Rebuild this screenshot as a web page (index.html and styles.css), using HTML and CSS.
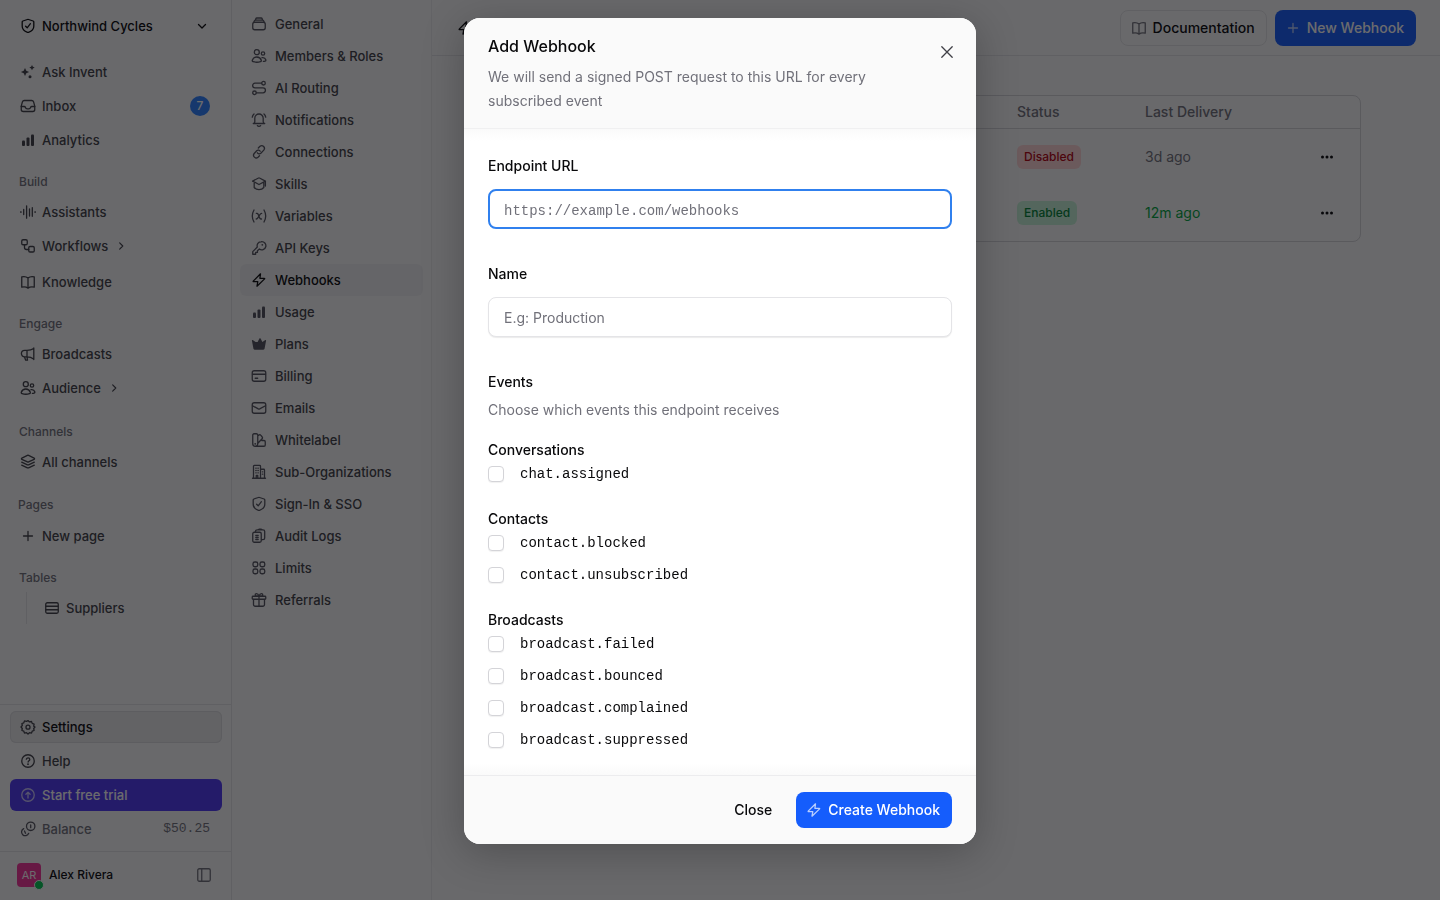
FILE: index.html
```html
<!DOCTYPE html>
<html lang="en">
<head>
<meta charset="UTF-8">
<meta name="viewport" content="width=device-width, initial-scale=1">
<title>Webhooks</title>
<link rel="stylesheet" href="styles.css">
</head>
<body>

<!-- icon sprite -->
<svg class="sprite" aria-hidden="true">
  <symbol id="shield" viewBox="0 0 18 18"><path d="M8.4 2.5 3.9 4a1 1 0 0 0-.7 1v4.2c0 3 2.6 5.1 5.3 6.1.3.1.7.1 1 0 2.7-1 5.300-3.1 5.300-6.1V5a1 1 0 0 0-.7-1L9.600 2.5a2 2 0 0 0-1.2 0z"/><path d="m6.600 9.200 1.600 1.600 3.200-4.1"/></symbol>
  <symbol id="chevron-down" viewBox="0 0 18 18"><path d="m5.500 7.500 3.500 3.500 3.500-3.500"/></symbol>
  <symbol id="chevron-right" viewBox="0 0 18 18"><path d="m7.500 5.500 3.500 3.500-3.500 3.500"/></symbol>
  <symbol id="sparkles" viewBox="0 0 18 18"><g class="fill"><path d="m6 4.900 1.300 2.800 2.800 1.300-2.800 1.300L6 13.100l-1.300-2.800L1.900 9l2.800-1.300z"/><path d="m13 1.900.9 1.800 1.800.9-1.800.9-.9 1.800-.9-1.800-1.800-.9 1.800-.9z"/><circle cx="11" cy="13.800" r="1.500"/></g></symbol>
  <symbol id="inbox" viewBox="0 0 18 18"><path d="M2.250 9.500h3c.6 0 1 .4 1.200.9.200.9.900 1.400 1.800 1.400h1.500c.9 0 1.600-.5 1.800-1.400.2-.5.6-.9 1.200-.9h3"/><path d="M5.300 3.500h7.400a2 2 0 0 1 1.900 1.400l1.150 4.300v3.300a2 2 0 0 1-2 2H4.250a2 2 0 0 1-2-2V9.200L3.400 4.900a2 2 0 0 1 1.900-1.400z"/></symbol>
  <symbol id="bars" viewBox="0 0 18 18"><g class="fill"><rect x="3" y="9.500" width="3" height="5.500" rx="1"/><rect x="7.500" y="6.500" width="3" height="8.500" rx="1"/><rect x="12" y="3.500" width="3" height="11.500" rx="1"/></g></symbol>
  <symbol id="wave" viewBox="0 0 18 18"><path d="M1.900 8.600v.8M4.700 6.500v5M7.600 2.800v12.400M10.500 6v7M13.300 4.700v8.600M16.100 8.600v.8"/></symbol>
  <symbol id="flow" viewBox="0 0 18 18"><rect x="2.750" y="2.750" width="5.500" height="5" rx="1.300"/><rect x="9.750" y="9.500" width="5.500" height="5.500" rx="1.300"/><path d="M5.500 7.750V10.500a2 2 0 0 0 2 2h2.250"/></symbol>
  <symbol id="book" viewBox="0 0 18 18"><path d="M9 5c-1.500-1.300-4-1.700-6.250-1.200v10.400C5 13.700 7.500 14 9 15.200c1.500-1.200 4-1.500 6.250-1V3.800C13 3.300 10.500 3.700 9 5zM9 5v10"/></symbol>
  <symbol id="megaphone" viewBox="0 0 18 18"><path d="M14.800 3v11.500M14.600 3.400C12.500 5 10.300 5.300 8 5.300H5.700a3.200 3.200 0 0 0 0 6.600H8c2.300 0 4.500.5 6.600 2.200M8 5.300v6.600M5.500 12l1.200 3.200h1.800L8 12"/></symbol>
  <symbol id="users" viewBox="0 0 18 18"><circle cx="6.800" cy="5.200" r="2.500"/><circle cx="13" cy="6.500" r="1.700"/><path d="M2.300 13.200C3 11.200 4.800 10 6.800 10s3.800 1.200 4.500 3.200c.2.700-.1 1.300-.8 1.500-2.400.7-5 .7-7.400 0-.7-.2-1-.8-.8-1.500zM12 10.700c1.900-.3 3.300.6 3.800 2 .2.600-.1 1.200-.7 1.400-.6.200-1.100.3-1.700.3"/></symbol>
  <symbol id="layers" viewBox="0 0 18 18"><path d="M8.400 2.400 2.900 5.100c-.6.300-.6 1 0 1.300l5.500 2.500c.4.200.8.200 1.200 0l5.500-2.500c.6-.3.6-1 0-1.300L9.600 2.400a1.400 1.400 0 0 0-1.200 0z"/><path d="m2.700 9.200 5.700 2.600c.4.200.8.200 1.200 0l5.700-2.600M2.700 12.200l5.700 2.600c.4.200.8.200 1.200 0l5.700-2.600"/></symbol>
  <symbol id="plus" viewBox="0 0 18 18"><path d="M9 4.500v9M4.500 9h9"/></symbol>
  <symbol id="rows" viewBox="0 0 18 18"><rect x="2.750" y="3.750" width="12.500" height="10.500" rx="1.500"/><path d="M3 7.250h12M3 10.750h12"/></symbol>
  <symbol id="gear" viewBox="0 0 18 18"><path d="m9 2.600 1.500 1.300 2-.4.700 1.900 1.900.7-.4 2L16 9l-1.300 1.500.4 2-1.900.7-.7 1.900-2-.4L9 16l-1.500-1.300-2 .4-.7-1.900-1.900-.7.4-2L2 9l1.300-1.500-.4-2 1.900-.7.7-1.900 2 .4z"/><circle cx="9" cy="9.200" r="2"/></symbol>
  <symbol id="help" viewBox="0 0 18 18"><circle cx="9" cy="9" r="6.250"/><path d="M7.300 7.200c.3-1 1-1.400 1.800-1.400 1 0 1.700.7 1.700 1.600 0 1.300-1.700 1.400-1.700 2.700"/><circle class="fill" cx="9" cy="12.200" r=".9"/></symbol>
  <symbol id="up" viewBox="0 0 18 18"><circle cx="9" cy="9" r="6.250"/><path d="M9 12V6.200M6.900 8.200 9 6.100l2.100 2.100"/></symbol>
  <symbol id="coins" viewBox="0 0 18 18"><circle cx="11.700" cy="6.300" r="4.200"/><path d="M4.700 8.600a3.700 3.700 0 1 0 5 4.700M11.700 4.900v2.800M5.500 11l1 2.200"/></symbol>
  <symbol id="panel" viewBox="0 0 18 18"><rect x="2.750" y="2.750" width="12.500" height="12.500" rx="1.500"/><path d="M6.750 3v12"/></symbol>
  <symbol id="stack" viewBox="0 0 18 18"><rect x="2.750" y="7.250" width="12.500" height="7.500" rx="2"/><path d="M3.800 7.300l.5-1.300a1.300 1.300 0 0 1 1.200-.8h7a1.300 1.300 0 0 1 1.200.8l.5 1.300M5.500 5l.3-1.200a1.200 1.200 0 0 1 1.200-.8h4a1.200 1.200 0 0 1 1.200.8l.3 1.200"/></symbol>
  <symbol id="route" viewBox="0 0 18 18"><circle cx="13.500" cy="4.200" r="1.800"/><circle cx="4.500" cy="13.800" r="1.800"/><path d="M11.700 4.200H5a2.300 2.300 0 0 0 0 4.700h8a2.400 2.400 0 0 1 0 4.900H6.300"/></symbol>
  <symbol id="bell" viewBox="0 0 18 18"><path d="M13.200 7.200c0-2.400-1.900-4.200-4.200-4.200S4.800 4.800 4.800 7.200v3.600c0 .9-.6 1.700-1.500 1.700h11.400c-.9 0-1.500-.8-1.500-1.700zM7.400 14.600c.7 1 2.500 1 3.200 0M2.300 6.200c.2-1.400.7-2.400 1.700-3.200M15.700 6.200c-.2-1.400-.7-2.400-1.700-3.200"/></symbol>
  <symbol id="link" viewBox="0 0 18 18"><path d="M7.300 9.700a2.300 2.300 0 0 0 3.500.6l3-3.200a2.700 2.700 0 0 0-3.800-3.800L8.300 5"/><path d="M10.200 8.300a2.300 2.300 0 0 0-3.500-.6l-2.500 2.800a2.700 2.700 0 0 0 3.800 3.800l1.500-1.500"/></symbol>
  <symbol id="skills" viewBox="0 0 18 18"><path d="M8.500 3 2.600 6.100 8.500 9.300c.3.200.7.200 1 0l5.900-3.200L9.500 3a1 1 0 0 0-1 0zM4.200 8v4.500c1 1.300 2.900 2.200 4.800 2.200s3.800-.9 4.800-2.200V8M15.400 6.300V11"/></symbol>
  <symbol id="vars" viewBox="0 0 18 18"><path d="M4 3c-2 3.500-2 8.500 0 12M14 3c2 3.500 2 8.500 0 12M6.300 6.300h.6c.7 0 1 .4 1.200.9l1.600 3.900c.2.500.6.900 1.200.9h.6M11.700 6.300c-1 0-1.500.8-2 1.600l-1.500 2.500c-.5.800-1 1.600-2 1.600"/></symbol>
  <symbol id="key" viewBox="0 0 18 18"><path d="M11.200 2.750a4.050 4.050 0 0 0-3.900 5.300L2.750 12.600v2.650h2.900v-1.800h1.800v-1.800l1.900-1.700a4.050 4.050 0 1 0 1.850-7.200z"/><circle class="fill" cx="12.300" cy="5.800" r=".9"/></symbol>
  <symbol id="bolt" viewBox="0 0 18 18"><path d="M10.500 2.800 3.200 10.100c-.2.200 0 .6.300.6h4.300l-.8 4.500 7.600-7.300c.2-.2.100-.6-.3-.6H9.900z"/></symbol>
  <symbol id="crown" viewBox="0 0 18 18"><path class="fill" d="M2.700 5c-.5-.3-1 .1-.8.600l1.500 8c.1.700.6 1.100 1.200 1.100h8.800c.6 0 1.100-.4 1.200-1.100l1.500-8c.2-.5-.3-.9-.8-.6l-2.900 1.900-1.700-3.200c-.3-.5-1.100-.5-1.400 0L7.600 6.900 5.600 6.900z"/></symbol>
  <symbol id="card" viewBox="0 0 18 18"><rect x="2.250" y="3.750" width="13.500" height="10.500" rx="2"/><path d="M2.500 7.250h13M5.200 11.250h2.500"/></symbol>
  <symbol id="mail" viewBox="0 0 18 18"><rect x="2.250" y="3.750" width="13.500" height="10.500" rx="2"/><path d="m2.500 6.800 5.800 3.100c.5.200.9.200 1.400 0l5.800-3.100"/></symbol>
  <symbol id="swatch" viewBox="0 0 18 18"><path d="M4 2.750h2.500a1.250 1.250 0 0 1 1.250 1.250v8.800a2.500 2.500 0 0 1-5 0V4A1.250 1.250 0 0 1 4 2.750zM7.800 5l1.100-.9a1.200 1.200 0 0 1 1.800.1l1.500 1.800a1.200 1.200 0 0 1-.1 1.700L7.600 12.500M11.800 9.500h2.200a1.250 1.250 0 0 1 1.250 1.250V14A1.250 1.250 0 0 1 14 15.250H5.200"/><circle class="fill" cx="5.200" cy="12.800" r=".9"/></symbol>
  <symbol id="building" viewBox="0 0 18 18"><path d="M2.500 15.250h13M3.500 15V3.250a.8.800 0 0 1 .8-.8h5.400a.8.800 0 0 1 .8.8V15M10.500 6.250h3.200a.8.800 0 0 1 .8.800V15M6.250 15v-2.500h1.500V15M5.800 5.200h.4M7.900 5.200h.4M5.800 7.500h.4M7.900 7.500h.4M5.800 9.800h.4M7.900 9.800h.4M12.400 8.800h.3M12.400 11.200h.3"/></symbol>
  <symbol id="logs" viewBox="0 0 18 18"><rect x="2.750" y="5.250" width="8.500" height="10" rx="1.500"/><path d="M5.500 5V4.500a1.700 1.700 0 0 1 1.700-1.700h5.800a1.700 1.700 0 0 1 1.700 1.700v6.500a1.700 1.700 0 0 1-1.700 1.700h-1.500M8 2.800l1-.6h2.300l1 .6M5.800 8.500h2.400M5.800 10.500h2.400M5.800 12.500h2.400"/></symbol>
  <symbol id="limits" viewBox="0 0 18 18"><rect x="3" y="3" width="4.750" height="4.750" rx="1.800"/><rect x="10" y="3" width="4.750" height="4.750" rx="1.800"/><rect x="3" y="10" width="4.750" height="4.750" rx="1.800"/><rect x="10" y="10" width="4.750" height="4.750" rx="1.800"/></symbol>
  <symbol id="gift" viewBox="0 0 18 18"><rect x="2.250" y="5.250" width="13.500" height="3" rx=".8"/><path d="M3.500 8.500v5a1.750 1.750 0 0 0 1.750 1.750h7.500a1.750 1.750 0 0 0 1.750-1.750v-5M9 5.250v10M9 5.200C8.500 3.500 7.600 2.600 6.500 2.600a1.300 1.300 0 0 0 0 2.600zM9 5.200c.5-1.700 1.400-2.600 2.500-2.600a1.300 1.300 0 0 1 0 2.600z"/></symbol>
  <symbol id="dots" viewBox="0 0 18 18"><g class="fill"><circle cx="4.500" cy="9" r="1.500"/><circle cx="9" cy="9" r="1.500"/><circle cx="13.500" cy="9" r="1.500"/></g></symbol>
  <symbol id="close" viewBox="0 0 18 18"><path d="m3.800 3.800 10.400 10.400M14.200 3.800 3.800 14.200"/></symbol>
</svg>

<div class="app">
  <aside class="sidebar">
    <button class="workspace" type="button">
      <svg class="icon"><use href="#shield"/></svg>
      <span>Northwind Cycles</span>
      <svg class="icon push"><use href="#chevron-down"/></svg>
    </button>

    <nav class="menu">
      <a class="item" href="#"><svg class="icon"><use href="#sparkles"/></svg>Ask Invent</a>
      <a class="item" href="#"><svg class="icon"><use href="#inbox"/></svg>Inbox<span class="count">7</span></a>
      <a class="item" href="#"><svg class="icon"><use href="#bars"/></svg>Analytics</a>

      <div class="section">Build</div>
      <a class="item" href="#"><svg class="icon"><use href="#wave"/></svg>Assistants</a>
      <a class="item has-sub" href="#"><svg class="icon"><use href="#flow"/></svg>Workflows<svg class="icon sub"><use href="#chevron-right"/></svg></a>
      <a class="item" href="#"><svg class="icon"><use href="#book"/></svg>Knowledge</a>

      <div class="section">Engage</div>
      <a class="item" href="#"><svg class="icon"><use href="#megaphone"/></svg>Broadcasts</a>
      <a class="item has-sub" href="#"><svg class="icon"><use href="#users"/></svg>Audience<svg class="icon sub"><use href="#chevron-right"/></svg></a>

      <div class="section">Channels</div>
      <a class="item" href="#"><svg class="icon"><use href="#layers"/></svg>All channels</a>

      <div class="section section-tall">Pages</div>
      <a class="item" href="#"><svg class="icon"><use href="#plus"/></svg>New page</a>

      <div class="section">Tables</div>
      <div class="tree">
        <a class="item" href="#"><svg class="icon"><use href="#rows"/></svg>Suppliers</a>
      </div>
    </nav>

    <div class="bottom">
      <a class="item selected" href="#"><svg class="icon"><use href="#gear"/></svg>Settings</a>
      <a class="item" href="#"><svg class="icon"><use href="#help"/></svg>Help</a>
      <a class="item trial" href="#"><svg class="icon"><use href="#up"/></svg>Start free trial</a>
      <a class="item balance" href="#"><svg class="icon"><use href="#coins"/></svg>Balance<span class="amount">$50.25</span></a>
    </div>

    <div class="account">
      <div class="avatar">AR<span class="online"></span></div>
      <span>Alex Rivera</span>
      <button class="panel-toggle" type="button" aria-label="Toggle sidebar"><svg class="icon"><use href="#panel"/></svg></button>
    </div>
  </aside>

  <nav class="settings">
    <a class="item" href="#"><svg class="icon"><use href="#stack"/></svg>General</a>
    <a class="item" href="#"><svg class="icon"><use href="#users"/></svg>Members &amp; Roles</a>
    <a class="item" href="#"><svg class="icon"><use href="#route"/></svg>AI Routing</a>
    <a class="item" href="#"><svg class="icon"><use href="#bell"/></svg>Notifications</a>
    <a class="item" href="#"><svg class="icon"><use href="#link"/></svg>Connections</a>
    <a class="item" href="#"><svg class="icon"><use href="#skills"/></svg>Skills</a>
    <a class="item" href="#"><svg class="icon"><use href="#vars"/></svg>Variables</a>
    <a class="item" href="#"><svg class="icon"><use href="#key"/></svg>API Keys</a>
    <a class="item active" href="#"><svg class="icon"><use href="#bolt"/></svg>Webhooks</a>
    <a class="item" href="#"><svg class="icon"><use href="#bars"/></svg>Usage</a>
    <a class="item" href="#"><svg class="icon"><use href="#crown"/></svg>Plans</a>
    <a class="item" href="#"><svg class="icon"><use href="#card"/></svg>Billing</a>
    <a class="item" href="#"><svg class="icon"><use href="#mail"/></svg>Emails</a>
    <a class="item" href="#"><svg class="icon"><use href="#swatch"/></svg>Whitelabel</a>
    <a class="item" href="#"><svg class="icon"><use href="#building"/></svg>Sub-Organizations</a>
    <a class="item" href="#"><svg class="icon"><use href="#shield"/></svg>Sign-In &amp; SSO</a>
    <a class="item" href="#"><svg class="icon"><use href="#logs"/></svg>Audit Logs</a>
    <a class="item" href="#"><svg class="icon"><use href="#limits"/></svg>Limits</a>
    <a class="item" href="#"><svg class="icon"><use href="#gift"/></svg>Referrals</a>
  </nav>

  <main class="main">
    <header class="topbar">
      <svg class="icon"><use href="#bolt"/></svg>
      <div class="actions">
        <button class="btn btn-outline" type="button"><svg class="icon"><use href="#book"/></svg>Documentation</button>
        <button class="btn btn-primary" type="button"><svg class="icon"><use href="#plus"/></svg>New Webhook</button>
      </div>
    </header>

    <div class="content">
      <div class="table-card">
        <table>
          <thead>
            <tr><td></td><th class="col-status">Status</th><th class="col-delivery">Last Delivery</th><td class="col-more"></td></tr>
          </thead>
          <tbody>
            <tr>
              <td></td>
              <td><span class="badge badge-red">Disabled</span></td>
              <td class="muted">3d ago</td>
              <td><button class="more" type="button" aria-label="More"><svg class="icon"><use href="#dots"/></svg></button></td>
            </tr>
            <tr>
              <td></td>
              <td><span class="badge badge-green">Enabled</span></td>
              <td class="recent">12m ago</td>
              <td><button class="more" type="button" aria-label="More"><svg class="icon"><use href="#dots"/></svg></button></td>
            </tr>
          </tbody>
        </table>
      </div>
    </div>
  </main>
</div>

<div class="overlay">
  <form class="modal" role="dialog" aria-labelledby="modal-title">
    <div class="modal-header">
      <div>
        <h2 id="modal-title">Add Webhook</h2>
        <p>We will send a signed POST request to this URL for every subscribed event</p>
      </div>
      <button class="modal-x" type="button" aria-label="Close dialog"><svg class="icon"><use href="#close"/></svg></button>
    </div>

    <div class="modal-body">
      <div class="field">
        <label for="url">Endpoint URL</label>
        <input class="input input-focus" id="url" type="text" placeholder="https://example.com/webhooks">
      </div>
      <div class="field">
        <label for="name">Name</label>
        <input class="input" id="name" type="text" placeholder="E.g: Production">
      </div>

      <div class="events">
        <h3>Events</h3>
        <p>Choose which events this endpoint receives</p>

        <fieldset>
          <legend>Conversations</legend>
          <label class="check"><input type="checkbox">chat.assigned</label>
        </fieldset>
        <fieldset>
          <legend>Contacts</legend>
          <label class="check"><input type="checkbox">contact.blocked</label>
          <label class="check"><input type="checkbox">contact.unsubscribed</label>
        </fieldset>
        <fieldset>
          <legend>Broadcasts</legend>
          <label class="check"><input type="checkbox">broadcast.failed</label>
          <label class="check"><input type="checkbox">broadcast.bounced</label>
          <label class="check"><input type="checkbox">broadcast.complained</label>
          <label class="check"><input type="checkbox">broadcast.suppressed</label>
        </fieldset>
      </div>
    </div>

    <div class="modal-footer">
      <button class="btn btn-plain" type="button">Close</button>
      <button class="btn btn-primary" type="submit"><svg class="icon"><use href="#bolt"/></svg>Create Webhook</button>
    </div>
  </form>
</div>

</body>
</html>
```

FILE: styles.css
```css
* {
  box-sizing: border-box;
}

body {
  margin: 0;
  font-family: Inter, "Liberation Sans", sans-serif;
  font-size: 14px;
  line-height: 20px;
  color: #09090b;
  background: #fafafa;
}

button,
input {
  font: inherit;
  color: inherit;
}

button {
  border: none;
  background: none;
  padding: 0;
  cursor: pointer;
}

a {
  color: inherit;
  text-decoration: none;
}

h2, h3, p {
  margin: 0;
}

.sprite {
  display: none;
}

.icon {
  width: 18px;
  height: 18px;
  flex: none;
  fill: none;
  stroke: currentColor;
  stroke-width: 1.3;
  stroke-linecap: round;
  stroke-linejoin: round;
}

.fill {
  fill: currentColor;
  stroke: none;
}

.app {
  display: flex;
  min-height: 100vh;
}

/* Sidebar */
.sidebar {
  width: 232px;
  height: 100vh;
  flex: none;
  display: flex;
  flex-direction: column;
  border-right: 1px solid #e4e4e7;
}

.workspace {
  display: flex;
  align-items: center;
  gap: 5px;
  height: 32px;
  margin: 10px 9px 14px 10px;
  padding: 0 11px 0 9px;
  font-size: 13px;
  font-weight: 500;
}

.push {
  margin-left: auto;
}

.menu {
  flex: 1;
  padding: 0 9px 0 10px;
}

.item {
  display: flex;
  align-items: center;
  gap: 5px;
  height: 32px;
  padding: 0 12px 0 9px;
  border-radius: 6px;
  font-size: 13px;
  font-weight: 500;
  color: #3f3f46;
}

.item + .item {
  margin-top: 2px;
}

.has-sub {
  margin-bottom: 2px;
}

.item.has-sub + .item {
  margin-top: 4px;
}

.has-sub .sub {
  width: 16px;
  height: 16px;
}

.count {
  display: grid;
  place-items: center;
  width: 20px;
  height: 20px;
  margin-left: auto;
  border-radius: 50%;
  background: #2b7fff;
  color: #fff;
  font-size: 12px;
}

.section {
  padding: 16px 9px 4px;
  font-size: 12px;
  font-weight: 500;
  color: #71717a;
}

.section-tall {
  padding-left: 8px;
  line-height: 22px;
}

.tree {
  margin-left: 16px;
  padding-left: 7px;
  border-left: 1px solid #e4e4e7;
}

.bottom {
  padding: 6px 9px 6px 10px;
  border-top: 1px solid #e4e4e7;
}

.selected {
  color: #09090b;
  background: #eaeaeb;
  box-shadow: inset 0 0 0 1px #dcdcdf;
}

.selected .icon {
  color: #3f3f46;
}

.trial {
  background: #4f39f6;
  color: #fff;
}

.trial .icon {
  opacity: 0.7;
}

.balance {
  color: #71717a;
}

.balance .icon {
  color: #52525c;
}

.amount {
  margin-left: auto;
  font-family: "Liberation Mono", monospace;
}

.account {
  display: flex;
  align-items: center;
  height: 49px;
  gap: 8px;
  padding: 0 18px 2px 17px;
  border-top: 1px solid #e4e4e7;
  font-size: 12px;
  font-weight: 500;
}

.avatar {
  position: relative;
  display: grid;
  place-items: center;
  width: 24px;
  height: 24px;
  border-radius: 4px;
  background: #f6339a;
  color: #fff;
  font-size: 11px;
  font-weight: 400;
}

.online {
  position: absolute;
  right: -3px;
  bottom: -3px;
  width: 10px;
  height: 10px;
  border: 1px solid #fafafa;
  border-radius: 50%;
  background: #00c950;
}

.panel-toggle {
  display: flex;
  margin-left: auto;
  color: #71717a;
}

/* Settings menu */
.settings {
  width: 200px;
  flex: none;
  padding: 8px;
  border-right: 1px solid #ececee;
}

.settings .item {
  gap: 7px;
  margin: 0;
  padding-left: 10px;
}

.settings .icon {
  color: #52525c;
}

.settings .active,
.settings .active .icon {
  color: #09090b;
}

.settings .active {
  background: #f1f1f2;
}

/* Page */
.main {
  flex: 1;
  min-width: 0;
}

.topbar {
  display: flex;
  align-items: center;
  justify-content: space-between;
  height: 56px;
  padding: 0 24px;
  border-bottom: 1px solid #e4e4e7;
}

.actions {
  display: flex;
  gap: 8px;
}

.btn {
  display: flex;
  align-items: center;
  gap: 5px;
  height: 36px;
  padding: 0 12px 0 9px;
  border-radius: 8px;
  font-weight: 500;
}

.btn-outline {
  padding-right: 11px;
  border: 1px solid #e4e4e7;
}

.btn-outline .icon {
  color: #71717a;
}

.btn-primary {
  background: #155dfc;
  color: #fff;
}

.btn-primary .icon {
  opacity: 0.7;
}

.content {
  padding: 39px 79px 39px 80px;
}

.table-card {
  padding-bottom: 1px;
  border: 1px solid #d4d4d8;
  border-radius: 8px;
  overflow: hidden;
}

table {
  width: 100%;
  border-collapse: collapse;
  table-layout: fixed;
}

th,
td {
  padding: 0 8px;
  text-align: left;
}

th {
  height: 32px;
  font-weight: 500;
  color: #71717a;
}

thead tr {
  border-bottom: 1px solid #d4d4d8;
}

tbody td {
  height: 56px;
  padding-top: 2px;
}

.col-status {
  width: 128px;
}

.col-delivery {
  width: 165px;
}

.col-more {
  width: 58px;
}

.badge {
  display: inline-block;
  padding: 2px 7px;
  border-radius: 6px;
  font-size: 12px;
  font-weight: 500;
}

.badge-red {
  background: #ffd5d5;
  color: #b3000f;
}

.badge-green {
  background: #c6f3d6;
  color: #008236;
}

.muted {
  color: #71717a;
}

.recent {
  color: #00a63e;
}

.more {
  display: flex;
  padding: 0 8px;
}

/* Dialog */
.overlay {
  position: fixed;
  inset: 0;
  display: flex;
  justify-content: center;
  align-items: flex-start;
  padding: 18px;
  overflow: auto;
  background: rgba(9, 9, 11, 0.6);
}

.modal {
  width: 512px;
  max-width: 100%;
  border-radius: 16px;
  background: #fff;
  box-shadow: 0 8px 40px rgba(0, 0, 0, 0.25);
  overflow: hidden;
}

.modal-header {
  display: flex;
  justify-content: space-between;
  align-items: flex-start;
  padding: 16px 20px 15px 24px;
  border-bottom: 1px solid #f0f0f1;
  background: #fafafa;
}

.modal-header h2 {
  font-size: 16px;
  line-height: 24px;
  font-weight: 500;
}

.modal-header p {
  max-width: 400px;
  margin-top: 7px;
}

.modal-header p,
.events p {
  line-height: 24px;
  color: #71717a;
}

.modal-x {
  display: flex;
  padding: 9px 0;
  color: #3f3f46;
}

.modal-body {
  padding: 25px 24px 19px;
  background: linear-gradient(#fafafa, #fff 12px, #fff calc(100% - 12px), #fafafa);
}

.field {
  margin-bottom: 33px;
}

.field label,
.events h3 {
  display: block;
  font-size: 14px;
  line-height: 24px;
  font-weight: 500;
}

.input {
  display: block;
  width: 100%;
  height: 40px;
  margin-top: 11px;
  padding: 0 15px;
  border: 1px solid #e4e4e7;
  border-radius: 8px;
  background: #fff;
  box-shadow: 0 1px 1px rgba(0, 0, 0, 0.08);
  outline: none;
}

.input::placeholder {
  color: #71717a;
  opacity: 1;
}

.input-focus {
  padding: 3px 14px 0;
  border: 2px solid #3080ee;
  box-shadow: none;
  font-family: "Liberation Mono", monospace;
}

.events p {
  margin: 4px 0 20px;
}

fieldset {
  min-width: 0;
  margin: 0;
  padding: 0;
  border: none;
}

fieldset + fieldset {
  margin-top: 21px;
}

legend {
  padding: 0;
  line-height: 16px;
  font-weight: 500;
}

.check {
  display: flex;
  align-items: center;
  gap: 16px;
  height: 32px;
  font-family: "Liberation Mono", monospace;
}

.check input {
  appearance: none;
  width: 16px;
  height: 16px;
  margin: 0;
  border: 1px solid #d4d4d8;
  border-radius: 4px;
  background: #fff;
  box-shadow: 0 1px 1px rgba(0, 0, 0, 0.06);
}

.modal-footer {
  display: flex;
  justify-content: flex-end;
  gap: 12px;
  padding: 16px 24px;
  border-top: 1px solid #ececee;
  background: #fafafa;
}

.btn-plain {
  padding: 0 12px;
}
```
